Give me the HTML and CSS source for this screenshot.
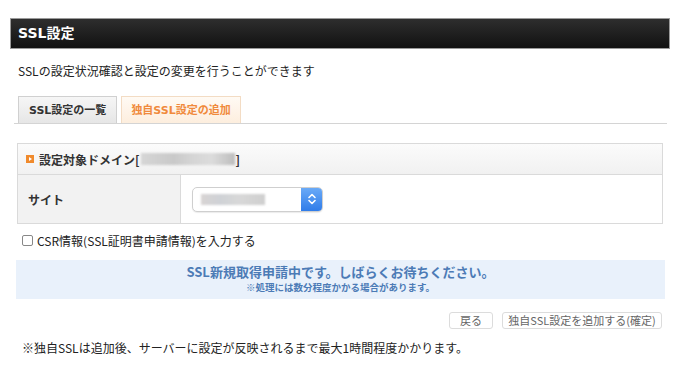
FILE: index.html
```html
<!DOCTYPE html>
<html lang="ja">
<head>
  <meta charset="UTF-8" />
  <title>SSL設定</title>
  <link rel="stylesheet" href="styles.css">
</head>
<body>

  <div class="page">
    <h1 class="title-bar">SSL設定</h1>

    <p class="desc">SSLの設定状況確認と設定の変更を行うことができます</p>

    <div class="tabs">
      <a class="tab">SSL設定の一覧</a>
      <a class="tab active">独自SSL設定の追加</a>
    </div>

    <div class="panel">
      <div class="panel-head">
        <span class="mark"></span>
        設定対象ドメイン[<span class="blur-text wide"></span>]
      </div>
      <div class="panel-row">
        <div class="label">サイト</div>
        <div class="value">
          <div class="select">
            <span class="blur-text"></span>
            <span class="select-arrows">
              <svg width="10" height="14" viewBox="0 0 10 14">
                <path d="M2 5.5 L5 2.5 L8 5.5 M2 8.5 L5 11.5 L8 8.5" fill="none" stroke="#fff" stroke-width="1.6" stroke-linecap="round" stroke-linejoin="round"/>
              </svg>
            </span>
          </div>
        </div>
      </div>
    </div>

    <label class="csr"><span class="check"></span>CSR情報(SSL証明書申請情報)を入力する</label>

    <div class="notice">
      <p class="notice-title">SSL新規取得申請中です。しばらくお待ちください。</p>
      <p class="notice-sub">※処理には数分程度かかる場合があります。</p>
    </div>

    <div class="actions">
      <button class="btn back">戻る</button>
      <button class="btn submit">独自SSL設定を追加する(確定)</button>
    </div>

    <p class="footer-note">※独自SSLは追加後、サーバーに設定が反映されるまで最大1時間程度かかります。</p>
  </div>

</body>
</html>
```

FILE: styles.css
```css
body {
  margin: 0;
  background: #fff;
  font-family: "Noto Sans CJK JP", "DejaVu Sans", sans-serif;
  color: #222;
}

.page {
  padding: 18px 10px 0;
}

.title-bar {
  margin: 0;
  height: 29px;
  line-height: 29px;
  padding-left: 7px;
  border: 1px solid #9a9a9a;
  background: linear-gradient(#2e2e2e, #111);
  color: #fff;
  font-family: "DejaVu Sans", "Noto Sans CJK JP", sans-serif;
  font-size: 14px;
  font-weight: bold;
}

.desc {
  margin: 13px 0 0 8px;
  font-size: 12px;
  line-height: 17px;
}

.tabs {
  display: flex;
  gap: 4px;
  margin: 17px 3px 0 4px;
  padding-left: 4px;
  border-bottom: 1px solid #d4d4d4;
}

.tab {
  height: 26px;
  line-height: 27px;
  padding: 0 10px;
  border: 1px solid #d0d0d0;
  border-bottom: none;
  background: linear-gradient(#f6f6f6, #e6e6e6);
  color: #333;
  font-family: "DejaVu Sans", "Noto Sans CJK JP", sans-serif;
  font-size: 11px;
  font-weight: bold;
}

.tab.active {
  padding: 0 9px;
  border-color: #f3dcc4;
  background: linear-gradient(#fffaf4, #fdeede);
  color: #f08a3c;
}

.panel {
  margin: 19px 7px 0 7px;
  border: 1px solid #dadada;
}

.panel-head {
  display: flex;
  align-items: center;
  height: 30px;
  padding-left: 8px;
  border-bottom: 1px solid #dadada;
  background: linear-gradient(#fbfbfb, #f1f1f1);
  font-size: 12px;
  font-weight: bold;
  color: #333;
}

.mark {
  width: 8px;
  height: 8px;
  margin-right: 5px;
  background: #f08a2c;
  position: relative;
}

.mark::after {
  content: "";
  position: absolute;
  left: 3px;
  top: 2px;
  border-left: 3px solid #fff;
  border-top: 2px solid transparent;
  border-bottom: 2px solid transparent;
}

.blur-text {
  display: inline-block;
  width: 64px;
  height: 11px;
  background: linear-gradient(90deg, #d8d4d4, #cfd2d6 30%, #d8d8d8 60%, #cfcfcf);
  filter: blur(1px);
}

.blur-text.wide {
  width: 94px;
  height: 12px;
  margin: 0 1px;
  background: linear-gradient(90deg, #d6d6d6, #c9c9c9 35%, #d5d5d5 55%, #dcdcdc 75%, #bdbdbd);
}

.panel-row {
  display: flex;
  height: 48px;
}

.label {
  width: 152px;
  padding-left: 10px;
  display: flex;
  align-items: center;
  border-right: 1px solid #dadada;
  background: #f2f2f2;
  font-size: 12px;
  font-weight: bold;
  color: #333;
}

.value {
  flex: 1;
  display: flex;
  align-items: center;
  padding-left: 11px;
}

.select {
  display: flex;
  align-items: center;
  justify-content: space-between;
  width: 131px;
  height: 25px;
  border: 1px solid #cfcfcf;
  border-radius: 5px;
  background: #fff;
  box-shadow: 0 1px 1px rgba(0, 0, 0, 0.08);
  overflow: hidden;
  padding-left: 8px;
  box-sizing: border-box;
}

.select-arrows {
  width: 21px;
  height: 100%;
  display: flex;
  align-items: center;
  justify-content: center;
  background: linear-gradient(#6aaaf7, #2f7ce9);
}

.csr {
  display: flex;
  align-items: center;
  margin: 8px 0 0 12px;
  font-size: 12px;
  line-height: 17px;
}

.check {
  width: 9px;
  height: 9px;
  margin-right: 4px;
  border: 1px solid #888;
  border-radius: 2px;
  background: #fff;
}

.notice {
  margin: 11px 5px 0 6px;
  height: 39px;
  padding-top: 3px;
  box-sizing: border-box;
  background: #e9f1fb;
  text-align: center;
  color: #4c7bb6;
  font-weight: bold;
}

.notice-title {
  margin: 0;
  font-size: 13px;
  line-height: 18px;
}

.notice-sub {
  margin: 0;
  font-size: 9.5px;
  line-height: 13px;
}

.actions {
  display: flex;
  justify-content: flex-end;
  gap: 9px;
  margin: 13px 8px 0 0;
}

.btn {
  height: 17px;
  padding: 0;
  border: 1px solid #dcdcdc;
  border-radius: 3px;
  background: #fff;
  color: #666;
  font-family: "Noto Sans CJK JP", "DejaVu Sans", sans-serif;
  font-size: 11px;
  line-height: 15px;
}

.btn.back {
  width: 44px;
}

.btn.submit {
  width: 160px;
}

.footer-note {
  margin: 10px 0 0 12px;
  font-size: 12px;
  line-height: 17px;
}
```
